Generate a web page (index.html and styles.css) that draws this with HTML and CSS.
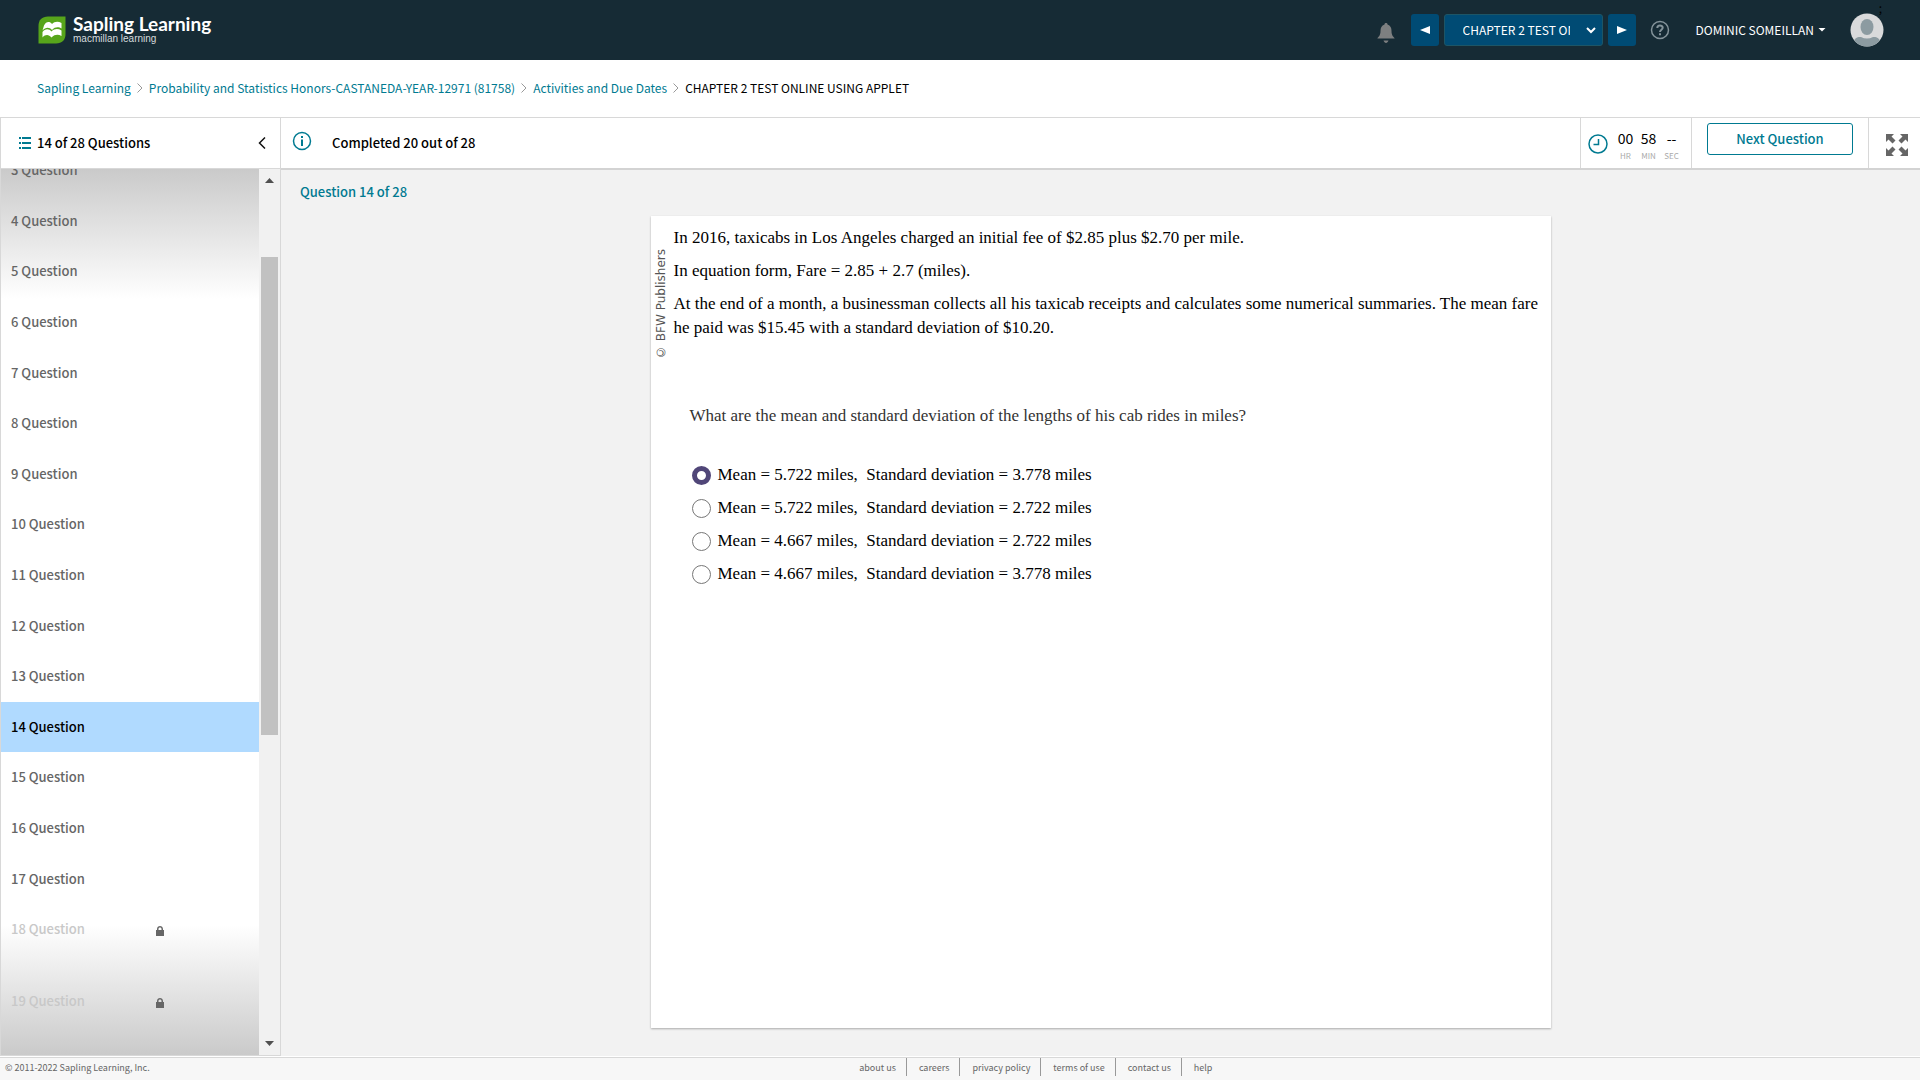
FILE: index.html
```html
<!DOCTYPE html>
<html lang="en">
<head>
    <meta charset="UTF-8">
    <meta name="viewport" content="width=device-width, initial-scale=1.0">
    <title>CHAPTER 2 TEST ONLINE USING APPLET - Sapling Learning</title>
    <link rel="stylesheet" href="styles.css">
</head>
<body>
    <header class="topbar">
        <a class="brand" href="#">
            <svg class="brand-logo" viewBox="0 0 28 28" aria-hidden="true">
                <path fill="#57a51b" d="M10 0.500H27.500V18C27.500 24 24 27.500 18 27.500H0.500V10C0.500 4 4 0.500 10 0.500Z"/>
                <path fill="#fff" d="M4.500 14.500L6 9.500C8 5.500 11.500 5 14 8C16.500 5.500 20 5 23.500 7V12.500C21 11 17 10.500 14 14C11.500 11 7.500 11 4.500 14.500Z"/>
                <path fill="#fff" d="M4.500 21.500V16C7 12.500 11 12.500 13.500 15.500C16.500 12.500 20 12.500 23.500 14.500V20C20.500 18.500 17 18 13.500 21.500C11 18.500 7.500 18 4.500 21.500Z"/>
            </svg>
            <span class="brand-text">
                <span class="brand-name">Sapling Learning</span>
                <span class="brand-sub">macmillan learning</span>
            </span>
        </a>

        <div class="topbar-tools">
            <button class="icon-btn bell" aria-label="Notifications">
                <svg width="18" height="20" viewBox="0 0 18 20"><path fill="#7d7f80" d="M9 0C10 0 10.500 0.500 10.500 1.500C13.500 2.500 14.500 5 14.500 8C14.500 12 16 13.500 17.500 15V15.500H0.500V15C2 13.500 3.500 12 3.500 8C3.500 5 4.500 2.500 7.500 1.500C7.500 0.500 8 0 9 0ZM6.500 17.500H11.500C11 19 10 20 9 20C8 20 7 19 6.500 17.500Z"/></svg>
            </button>
            <div class="chapter-nav">
                <button class="chapter-btn" aria-label="Previous activity">
                    <svg width="10" height="8" viewBox="0 0 10 8"><path fill="#fff" d="M10 0V8L0 4Z"/></svg>
                </button>
                <div class="chapter-select">
                    <select aria-label="Activity">
                        <option>CHAPTER 2 TEST ONLINE USING APPLET</option>
                    </select>
                    <svg width="10" height="7" viewBox="0 0 10 7"><path fill="none" stroke="#fff" stroke-width="2" d="M1 1L5 5L9 1"/></svg>
                </div>
                <button class="chapter-btn" aria-label="Next activity">
                    <svg width="10" height="8" viewBox="0 0 10 8"><path fill="#fff" d="M0 0V8L10 4Z"/></svg>
                </button>
            </div>
            <button class="icon-btn help" aria-label="Help">
                <svg width="20" height="20" viewBox="0 0 20 20" fill="none" stroke="#84939a" stroke-width="1.500"><circle cx="10" cy="10" r="8.500"/><path stroke-width="2" d="M7.300 8C7.300 4.800 12.700 4.800 12.700 7.800C12.700 9.700 10 9.700 10 12M10 13.300V15.300"/></svg>
            </button>
            <button class="user-menu">
                DOMINIC SOMEILLAN
                <svg width="8" height="4" viewBox="0 0 8 4"><path fill="#fff" d="M0.500 0H7.500L4 3.500Z"/></svg>
            </button>
            <div class="avatar">
                <svg width="34" height="34" viewBox="0 0 34 34" aria-hidden="true">
                    <clipPath id="avatarClip"><circle cx="17" cy="17" r="16.500"/></clipPath>
                    <g clip-path="url(#avatarClip)">
                        <rect width="34" height="34" fill="#d9dadb"/>
                        <path fill="#8c9ba1" d="M4 34V29C4 25 8 23.500 11 24C15 26 19 26 23 24C26 23.500 30 25 30 29V34Z"/>
                        <ellipse cx="17" cy="14" rx="6.500" ry="8" fill="#8c9ba1"/>
                    </g>
                </svg>
                <span class="avatar-mark">;</span>
            </div>
        </div>
    </header>

    <nav class="breadcrumb" aria-label="Breadcrumb">
        <a href="#">Sapling Learning</a>
        <svg width="6" height="10" viewBox="0 0 6 10"><path d="M0.500 0.500L5 5L0.500 9.500"/></svg>
        <a href="#">Probability and Statistics Honors-CASTANEDA-YEAR-12971 (81758)</a>
        <svg width="6" height="10" viewBox="0 0 6 10"><path d="M0.500 0.500L5 5L0.500 9.500"/></svg>
        <a href="#">Activities and Due Dates</a>
        <svg width="6" height="10" viewBox="0 0 6 10"><path d="M0.500 0.500L5 5L0.500 9.500"/></svg>
        <span>CHAPTER 2 TEST ONLINE USING APPLET</span>
    </nav>

    <div class="workspace">
        <aside class="sidebar">
            <div class="sidebar-head">
                <svg width="12" height="12" viewBox="0 0 12 12" fill="#007a91"><path d="M0 0H2V2H0ZM3 0H12V2H3ZM0 5H2V7H0ZM3 5H12V7H3ZM0 10H2V12H0ZM3 10H12V12H3Z"/></svg>
                <h2>14 of 28 Questions</h2>
                <button class="icon-btn" aria-label="Collapse">
                    <svg width="8" height="12" viewBox="0 0 8 12"><path fill="none" stroke="#111" stroke-width="1.500" d="M7 0.500L1.500 6L7 11.500"/></svg>
                </button>
            </div>
            <div class="sidebar-body">
                <ul class="question-list">
                    <li><a href="#">3 Question</a></li>
                    <li><a href="#">4 Question</a></li>
                    <li><a href="#">5 Question</a></li>
                    <li><a href="#">6 Question</a></li>
                    <li><a href="#">7 Question</a></li>
                    <li><a href="#">8 Question</a></li>
                    <li><a href="#">9 Question</a></li>
                    <li><a href="#">10 Question</a></li>
                    <li><a href="#">11 Question</a></li>
                    <li><a href="#">12 Question</a></li>
                    <li><a href="#">13 Question</a></li>
                    <li class="active"><a href="#">14 Question</a></li>
                    <li><a href="#">15 Question</a></li>
                    <li><a href="#">16 Question</a></li>
                    <li><a href="#">17 Question</a></li>
                    <li class="locked">
                        <span>18 Question</span>
                        <svg width="8" height="10" viewBox="0 0 8 10"><path fill="#666" d="M0 4H1V3C1 -1 7 -1 7 3V4H8V10H0ZM2.500 4H5.500V3C5.500 1 2.500 1 2.500 3Z"/></svg>
                    </li>
                    <li class="locked">
                        <span>19 Question</span>
                        <svg width="8" height="10" viewBox="0 0 8 10"><path fill="#666" d="M0 4H1V3C1 -1 7 -1 7 3V4H8V10H0ZM2.500 4H5.500V3C5.500 1 2.500 1 2.500 3Z"/></svg>
                    </li>
                </ul>
                <div class="scrollbar" aria-hidden="true">
                    <svg width="9" height="5" viewBox="0 0 9 5"><path fill="#505050" d="M0 5L4.500 0L9 5Z"/></svg>
                    <div class="scroll-track"><div class="scroll-thumb"></div></div>
                    <svg width="9" height="5" viewBox="0 0 9 5"><path fill="#505050" d="M0 0L4.500 5L9 0Z"/></svg>
                </div>
            </div>
        </aside>

        <main class="content">
            <div class="toolbar">
                <svg class="info-icon" width="20" height="20" viewBox="0 0 20 20"><circle cx="10" cy="10" r="8.500" fill="none" stroke="#007a91" stroke-width="1.500"/><path fill="#007a91" d="M9 5H11V7H9ZM9 8.500H11V15H9Z"/></svg>
                <p class="progress">Completed 20 out of 28</p>
                <div class="timer">
                    <svg width="20" height="20" viewBox="0 0 20 20" fill="none" stroke="#007a91"><circle cx="10" cy="10" r="9" stroke-width="1.500"/><path stroke-width="1.500" d="M10.500 5V10.500H5.500"/></svg>
                    <div class="timer-unit"><span>00</span><small>HR</small></div>
                    <div class="timer-unit"><span>58</span><small>MIN</small></div>
                    <div class="timer-unit"><span>--</span><small>SEC</small></div>
                </div>
                <div class="next-cell">
                    <button class="btn-next">Next Question</button>
                </div>
                <button class="icon-btn expand" aria-label="Full screen">
                    <svg width="22" height="22" viewBox="0 0 22 22"><path fill="#666" d="M0 0H8L5.500 2.500L9.500 6.500L6.500 9.500L2.500 5.500L0 8ZM22 0V8L19.500 5.500L15.500 9.500L12.500 6.500L16.500 2.500L14 0ZM0 22V14L2.500 16.500L6.500 12.500L9.500 15.500L5.500 19.500L8 22ZM22 22H14L16.500 19.500L12.500 15.500L15.500 12.500L19.500 16.500L22 14Z"/></svg>
                </button>
            </div>

            <div class="question-area">
                <h3 class="question-title">Question 14 of 28</h3>
                <article class="question-card">
                    <div class="copyright-strip">© BFW Publishers</div>
                    <div class="question-text">
                        <p>In 2016, taxicabs in Los Angeles charged an initial fee of $2.85 plus $2.70 per mile.</p>
                        <p>In equation form, Fare = 2.85 + 2.7 (miles).</p>
                        <p>At the end of a month, a businessman collects all his taxicab receipts and calculates some numerical summaries. The mean fare he paid was $15.45 with a standard deviation of $10.20.</p>

                        <form class="answer-form">
                            <p class="prompt" id="prompt">What are the mean and standard deviation of the lengths of his cab rides in miles?</p>
                            <div class="answers" role="radiogroup" aria-labelledby="prompt">
                                <label><input type="radio" name="answer" checked>Mean = 5.722 miles,&nbsp; Standard deviation = 3.778 miles</label>
                                <label><input type="radio" name="answer">Mean = 5.722 miles,&nbsp; Standard deviation = 2.722 miles</label>
                                <label><input type="radio" name="answer">Mean = 4.667 miles,&nbsp; Standard deviation = 2.722 miles</label>
                                <label><input type="radio" name="answer">Mean = 4.667 miles,&nbsp; Standard deviation = 3.778 miles</label>
                            </div>
                        </form>
                    </div>
                </article>
            </div>
        </main>
    </div>

    <footer class="footer">
        <p>© 2011-2022 Sapling Learning, Inc.</p>
        <ul>
            <li><a href="#">about us</a></li>
            <li><a href="#">careers</a></li>
            <li><a href="#">privacy policy</a></li>
            <li><a href="#">terms of use</a></li>
            <li><a href="#">contact us</a></li>
            <li><a href="#">help</a></li>
        </ul>
    </footer>
</body>
</html>
```
FILE: styles.css
```css
* {
    margin: 0;
    padding: 0;
    box-sizing: border-box;
}

body {
    display: flex;
    flex-direction: column;
    height: 100vh;
    font-family: "Noto Sans CJK SC", "Open Sans", sans-serif;
    font-size: 12px;
    line-height: 20px;
    color: #000;
    background: #fff;
}

a {
    color: inherit;
    text-decoration: none;
}

ul {
    list-style: none;
}

button,
select {
    font: inherit;
    color: inherit;
    border: none;
    background: none;
    cursor: pointer;
}

svg {
    display: block;
    flex: none;
}

/* Top bar */
.topbar {
    display: flex;
    align-items: center;
    justify-content: space-between;
    height: 60px;
    padding: 0 36px 0 38px;
    color: #fff;
    background: #162b35;
}

.brand {
    display: flex;
    align-items: center;
    gap: 7px;
}

.brand-logo {
    width: 28px;
    height: 28px;
}

.brand-text {
    display: flex;
    flex-direction: column;
}

.brand-name {
    font-family: Lato, sans-serif;
    font-size: 19px;
    font-weight: 700;
    line-height: 18px;
}

.brand-sub {
    font-family: "Liberation Sans", Arial, sans-serif;
    font-size: 10px;
    line-height: 12px;
    color: #d5dadc;
}

.topbar-tools {
    display: flex;
    align-items: center;
}

.bell {
    margin: 6px 16px 0 0;
}

.chapter-nav {
    display: flex;
    gap: 5px;
    margin-right: 14px;
}

.chapter-btn {
    display: flex;
    align-items: center;
    justify-content: center;
    width: 28px;
    height: 32px;
    border-radius: 3px;
    background: #004b74;
}

.chapter-select {
    position: relative;
    width: 159px;
}

.chapter-select select {
    appearance: none;
    width: 100%;
    height: 32px;
    padding: 0 32px 0 18px;
    border: 1px solid #1d5566;
    border-radius: 3px;
    background: #004b74;
}

.chapter-select svg {
    position: absolute;
    top: 13px;
    right: 7px;
    pointer-events: none;
}

.help {
    margin-right: 26px;
}

.user-menu {
    display: flex;
    align-items: center;
    gap: 4px;
    margin-right: 24px;
}

.avatar {
    position: relative;
}

.avatar-mark {
    position: absolute;
    top: -15px;
    right: 2px;
    color: #000;
}

/* Breadcrumb */
.breadcrumb {
    display: flex;
    align-items: center;
    gap: 6px;
    height: 57px;
    padding: 0 37px 2px;
}

.breadcrumb a {
    color: #007a91;
}

.breadcrumb path {
    fill: none;
    stroke: #999;
}

/* Workspace */
.workspace {
    display: flex;
    flex: 1;
    min-height: 0;
    margin-bottom: 1px;
    border-top: 1px solid #d8d8d8;
}

.sidebar {
    display: flex;
    flex-direction: column;
    width: 281px;
    border: 1px solid #d8d8d8;
    border-top: none;
}

.sidebar-head {
    display: flex;
    align-items: center;
    gap: 6px;
    height: 51px;
    padding: 0 14px 0 18px;
    border-bottom: 1px solid #d8d8d8;
}

.sidebar-head h2 {
    flex: 1;
    font-size: 13px;
    font-weight: 500;
}

.sidebar-body {
    position: relative;
    display: flex;
    flex: 1;
    min-height: 0;
    overflow: hidden;
    background: linear-gradient(#cacaca, #fff 130px, #fff calc(100% - 130px), #cacaca);
}

.question-list {
    display: flex;
    flex: 1;
    flex-direction: column;
    margin: -24px 0 7px;
    font-size: 13px;
    font-weight: 500;
    color: #666;
}

.question-list li {
    display: flex;
    flex: 1;
    align-items: center;
    padding: 0 10px;
}

.question-list .active {
    color: #000;
    background: #b0daff;
}

.question-list .locked {
    flex: 0 0 72px;
    align-items: flex-start;
    justify-content: space-between;
    padding: 15px 95px 0 10px;
    color: #c8c8c8;
}

.locked svg {
    margin-top: 7px;
}

.scrollbar {
    display: flex;
    flex-direction: column;
    align-items: center;
    width: 21px;
    padding: 9px 0;
    background: #f1f1f1;
}

.scroll-track {
    flex: 1;
    width: 17px;
    padding-top: 74px;
}

.scroll-thumb {
    height: 61%;
    background: #c1c1c1;
}

.content {
    display: flex;
    flex: 1;
    flex-direction: column;
    min-width: 0;
}

.toolbar {
    display: flex;
    height: 52px;
    border-bottom: 2px solid #d3d3d3;
}

.info-icon {
    margin: 13px 20px 0 11px;
}

.progress {
    flex: 1;
    font-size: 13px;
    font-weight: 500;
    line-height: 50px;
}

.timer {
    display: flex;
    gap: 8px;
    width: 111px;
    padding: 9px 7px 0;
    border-left: 1px solid #d8d8d8;
}

.timer > svg {
    margin: 7px 2px 0 0;
}

.timer-unit {
    display: flex;
    flex-direction: column;
    align-items: center;
    width: 15px;
}

.timer-unit span {
    font-size: 14px;
    line-height: 22px;
}

.timer-unit small {
    font-size: 8px;
    line-height: 14px;
    color: #aaa;
}

.next-cell {
    padding: 5px 15px 0;
    border: solid #d8d8d8;
    border-width: 0 1px;
}

.btn-next {
    width: 146px;
    height: 32px;
    border: 1px solid #007a91;
    border-radius: 3px;
    font-size: 13px;
    font-weight: 500;
    color: #007a91;
}

.expand {
    padding: 4px 12px 0 17px;
}

/* Question */
.question-area {
    display: flex;
    flex: 1;
    flex-direction: column;
    padding: 12px 19px 28px;
    background: #f2f2f2;
}

.question-title {
    font-size: 13px;
    font-weight: 500;
    color: #007a91;
}

.question-card {
    display: flex;
    flex: 1;
    width: 100%;
    max-width: 900px;
    margin: 14px auto 0;
    background: #fff;
    box-shadow: 0 1px 2px rgba(0, 0, 0, 0.3);
    font-family: "Liberation Serif", "Times New Roman", serif;
    font-size: 17px;
    line-height: 24px;
}

.copyright-strip {
    align-self: flex-start;
    width: 23px;
    margin-top: 33px;
    padding-right: 3px;
    writing-mode: vertical-rl;
    transform: rotate(180deg);
    font-family: "DejaVu Sans", Verdana, sans-serif;
    font-size: 12px;
    line-height: 14px;
    color: #555;
}

.question-text {
    flex: 1;
    padding: 10px 10px 0 0;
}

.question-text p {
    margin-bottom: 9px;
}

.answer-form {
    margin: 64px 16px 0;
}

.question-text .prompt {
    margin-bottom: 35px;
    color: #333;
}

.answers {
    display: flex;
    flex-direction: column;
    gap: 9px;
}

.answers label {
    display: flex;
    align-items: center;
    gap: 7px;
}

.answers input {
    appearance: none;
    width: 19px;
    height: 19px;
    border: 1px solid #777;
    border-radius: 50%;
    margin-left: 2px;
}

.answers input:checked {
    border: 5px solid #504678;
}

/* Footer */
.footer {
    display: flex;
    height: 23px;
    padding-left: 5px;
    border-top: 1px solid #d8d8d8;
    background: #f7f7f7;
    font-size: 9px;
    color: #666;
}

.footer ul {
    display: flex;
    flex: 1;
    justify-content: center;
    height: 18px;
}

.footer li {
    padding: 0 10px 0 12px;
    border-right: 1px solid #999;
}

.footer li:last-child {
    border-right: none;
}
```
